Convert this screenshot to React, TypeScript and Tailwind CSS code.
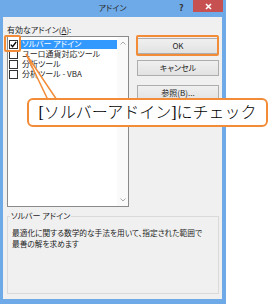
import React from "react";

const ui = "font-['Noto_Sans_CJK_JP',sans-serif] [font-feature-settings:'palt']";

const ADDINS = [
  { name: "ソルバー アドイン", checked: true },
  { name: "ユーロ通貨対応ツール", checked: false },
  { name: "分析ツール", checked: false },
  { name: "分析ツール - VBA", checked: false },
];

function CheckBox({ checked }: { checked: boolean }) {
  return (
    <div className="w-[9px] h-[9px] border border-[#333] bg-white flex items-center justify-center shrink-0">
      {checked && (
        <svg width="7" height="7" viewBox="0 0 7 7">
          <path d="M0.8 3.6 L2.6 5.6 L6.2 0.9" stroke="#000" strokeWidth="1.4" fill="none" />
        </svg>
      )}
    </div>
  );
}

function Button({ label }: { label: string }) {
  return (
    <div className="h-[16px] border border-[#adadad] bg-gradient-to-b from-[#f0f0f0] to-[#e2e2e2] flex items-center justify-center text-[8px] text-[#1e1e1e]">
      {label}
    </div>
  );
}

export default function App() {
  return (
    <div className={`relative w-[275px] h-[304px] bg-white overflow-hidden ${ui}`}>
      {/* window */}
      <div className="w-[226px] h-[304px] flex flex-col bg-[#6eaae8] pl-[3px] pr-[4px] pb-[5px]">
        {/* title bar */}
        <div className="relative h-[17px] flex items-center justify-center -mx-[3px]">
          <span className="text-[8px] text-[#2b2b2b] -mt-[1px]">アドイン</span>
          <span className="absolute left-[179px] top-[1px] text-[9px] font-bold text-[#333]">?</span>
          <div className="absolute left-[193px] top-0 w-[30px] h-[12px] bg-[#c75050] flex items-center justify-center">
            <svg width="7" height="7" viewBox="0 0 7 7">
              <path d="M1 1 L6 6 M6 1 L1 6" stroke="#fff" strokeWidth="1.6" />
            </svg>
          </div>
        </div>

        {/* client area */}
        <div className="flex-1 bg-[#f0f0f0] flex flex-col pl-[4px] pr-[3px] pt-[8px] pb-[5px] text-[#1e1e1e]">
          <div className="text-[8px] leading-[10px]">
            有効なアドイン(<span className="underline">A</span>):
          </div>

          <div className="flex gap-[8px] mt-[1px]">
            {/* list box */}
            <div className="w-[122px] h-[171px] border border-[#8a8a8a] bg-white flex">
              <div className="flex-1 flex flex-col pt-[2px] pl-[1px]">
                {ADDINS.map((a, i) => (
                  <div key={a.name} className="h-[10px] flex items-center gap-[3px]">
                    <CheckBox checked={a.checked} />
                    <div
                      className={`flex-1 h-[9px] flex items-center text-[8px] leading-none pl-[1px] ${
                        i === 0 ? "bg-[#3399ff] text-white" : "text-[#1e1e1e]"
                      }`}
                    >
                      {a.name}
                    </div>
                  </div>
                ))}
              </div>
              {/* scrollbar */}
              <div className="w-[11px] flex flex-col justify-between items-center py-[4px] bg-[#fafafa]">
                <svg width="6" height="4" viewBox="0 0 6 4">
                  <path d="M0.5 3.5 L3 1 L5.5 3.5" stroke="#a8a8a8" strokeWidth="1" fill="none" />
                </svg>
                <svg width="6" height="4" viewBox="0 0 6 4">
                  <path d="M0.5 0.5 L3 3 L5.5 0.5" stroke="#a8a8a8" strokeWidth="1" fill="none" />
                </svg>
              </div>
            </div>

            {/* buttons */}
            <div className="flex-1 flex flex-col pt-[2px]">
              <div className="relative">
                <Button label="OK" />
                <span className="absolute left-[-1px] right-0 top-[-3px] bottom-[-2px] border-2 border-[#f28c38] rounded-[2px]" />
              </div>
              <div className="mt-[6px]">
                <Button label="キャンセル" />
              </div>
              <div className="mt-[9px]">
                <Button label="参照(B)..." />
              </div>
            </div>
          </div>

          {/* description group */}
          <div className="relative mt-[9px] flex-1 border border-[#dadada] pl-[4px] pt-[10px]">
            <span className="absolute left-[2px] top-[-6px] bg-[#f0f0f0] px-[1px] text-[8px] leading-[10px]">
              ソルバー アドイン
            </span>
            <p className="text-[7.7px] leading-[11px]">
              最適化に関する数学的な手法を用いて、指定された範囲で
              <br />
              最善の解を求めます
            </p>
          </div>
        </div>
      </div>

      {/* annotation: highlight on checkbox */}
      <span className="absolute left-[4px] top-[35px] w-[17px] h-[17px] border-2 border-[#f28c38] rounded-[2px]" />

      {/* callout tail */}
      <svg className="absolute left-0 top-0" width="275" height="304" viewBox="0 0 275 304">
        <polygon points="26,54 48,100 57,100" fill="#fff" stroke="#f28c38" strokeWidth="1.5" />
      </svg>

      {/* callout */}
      <div className="absolute left-[27px] top-[98px] w-[241px] h-[29px] bg-white border-2 border-[#f28c38] rounded-[6px] flex items-center justify-center">
        <span className="text-[16px] leading-none text-black font-light font-['Liberation_Serif','Noto_Sans_CJK_JP',serif] [font-feature-settings:normal]">
          [ソルバーアドイン]にチェック
        </span>
      </div>
    </div>
  );
}
